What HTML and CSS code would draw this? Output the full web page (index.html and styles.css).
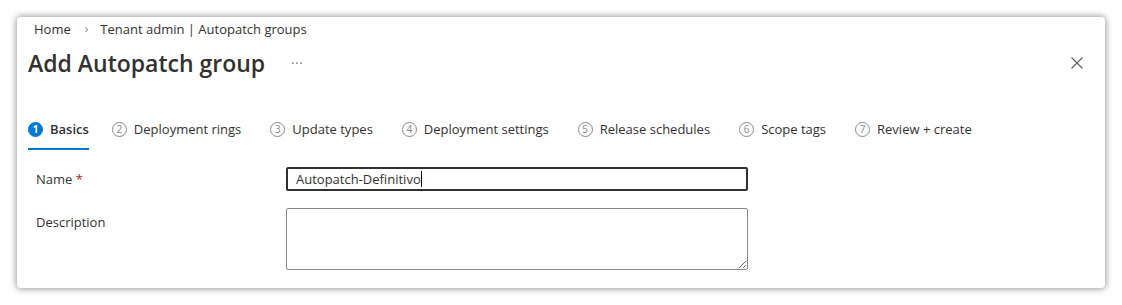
FILE: index.html
```html
<!DOCTYPE html>
<html lang="en">
<head>
    <meta charset="UTF-8">
    <meta name="viewport" content="width=device-width, initial-scale=1.0">
    <title>Add Autopatch group</title>
    <link rel="stylesheet" href="styles.css">
</head>
<body>
    <div class="blade">
        <nav class="crumbs">
            <a href="#">Home</a>
            <span class="sep">›</span>
            <a href="#">Tenant admin | Autopatch groups</a>
        </nav>

        <header class="blade-head">
            <h1>Add Autopatch group</h1>
            <span class="more">···</span>
            <button class="close" type="button" aria-label="Close">
                <svg width="12" height="12" viewBox="0 0 12 12">
                    <path d="M0.5 0.5 L11.5 11.5 M11.5 0.5 L0.5 11.5" stroke="#605e5c" stroke-width="1.1" fill="none"/>
                </svg>
            </button>
        </header>

        <ul class="steps">
            <li class="step active"><span class="num">1</span>Basics</li>
            <li class="step"><span class="num">2</span>Deployment rings</li>
            <li class="step"><span class="num">3</span>Update types</li>
            <li class="step"><span class="num">4</span>Deployment settings</li>
            <li class="step"><span class="num">5</span>Release schedules</li>
            <li class="step"><span class="num">6</span>Scope tags</li>
            <li class="step"><span class="num">7</span>Review + create</li>
        </ul>

        <form class="fields">
            <div class="row row-center">
                <label for="groupName">Name <span class="req">*</span></label>
                <div class="textbox" id="groupName">Autopatch-Definitivo<span class="caret"></span></div>
            </div>
            <div class="row">
                <label class="label-top" for="groupDesc">Description</label>
                <textarea id="groupDesc"></textarea>
            </div>
        </form>
    </div>
</body>
</html>
```

FILE: styles.css
```css
body {
    margin: 0;
    background: #fff;
    font-family: "Segoe UI", "Open Sans", "Noto Sans", sans-serif;
    color: #323130;
}

.blade {
    margin: 17px;
    width: 1088px;
    height: 271px;
    background: #fff;
    border-radius: 4px;
    box-shadow: 0 0 6px 1px rgba(0, 0, 0, 0.4);
    overflow: hidden;
    box-sizing: border-box;
}

/* breadcrumb */
.crumbs {
    display: flex;
    align-items: center;
    padding: 3px 0 0 17px;
    font-size: 13px;
    line-height: 18px;
}

.crumbs a {
    color: #323130;
    text-decoration: none;
}

.crumbs .sep {
    color: #8a8886;
    font-size: 12px;
    margin: 0 12px 0 14px;
}

/* title row */
.blade-head {
    display: flex;
    align-items: center;
    margin-top: 9px;
    padding: 0 22px 0 11px;
    height: 32px;
}

.blade-head h1 {
    margin: 0;
    font-size: 23px;
    font-weight: 600;
    line-height: 32px;
}

.more {
    margin-left: 26px;
    color: #605e5c;
    font-size: 12px;
    letter-spacing: 1px;
}

.close {
    margin-left: auto;
    border: none;
    background: none;
    padding: 0;
    width: 12px;
    height: 12px;
    display: flex;
}

/* wizard steps */
.steps {
    list-style: none;
    display: flex;
    margin: 40px 0 0;
    padding: 0 0 0 11px;
    gap: 29px;
}

.step {
    display: flex;
    align-items: center;
    font-size: 13px;
    line-height: 20px;
    padding-bottom: 9px;
    border-bottom: 2px solid transparent;
    white-space: nowrap;
}

.step .num {
    width: 13px;
    height: 13px;
    border: 1px solid #8a8886;
    border-radius: 50%;
    color: #8a8886;
    font-size: 10px;
    line-height: 13px;
    text-align: center;
    margin-right: 7px;
}

.step.active {
    font-weight: 600;
    border-bottom-color: #0078d4;
    margin-right: -6px;
}

.step.active .num {
    background: #0078d4;
    border-color: #0078d4;
    color: #fff;
    font-weight: 700;
}

/* form */
.fields {
    margin: 17px 0 0;
    padding: 0 0 0 19px;
}

.row {
    display: flex;
    align-items: flex-start;
    margin-bottom: 17px;
}

.row-center {
    align-items: center;
}

.row label {
    width: 250px;
    font-size: 13px;
    line-height: 18px;
}

.row .label-top {
    padding-top: 5px;
}

.req {
    color: #a4262c;
}

.textbox {
    width: 462px;
    height: 24px;
    box-sizing: border-box;
    border: 2px solid #323130;
    border-radius: 2px;
    padding: 0 8px;
    font-size: 13px;
    line-height: 20px;
    display: flex;
    align-items: center;
}

.caret {
    display: inline-block;
    width: 1px;
    height: 16px;
    background: #000;
}

textarea {
    width: 462px;
    height: 62px;
    box-sizing: border-box;
    border: 1px solid #8a8886;
    border-radius: 2px;
    font-family: inherit;
    font-size: 13px;
    padding: 4px 8px;
    margin: 0;
}
```
